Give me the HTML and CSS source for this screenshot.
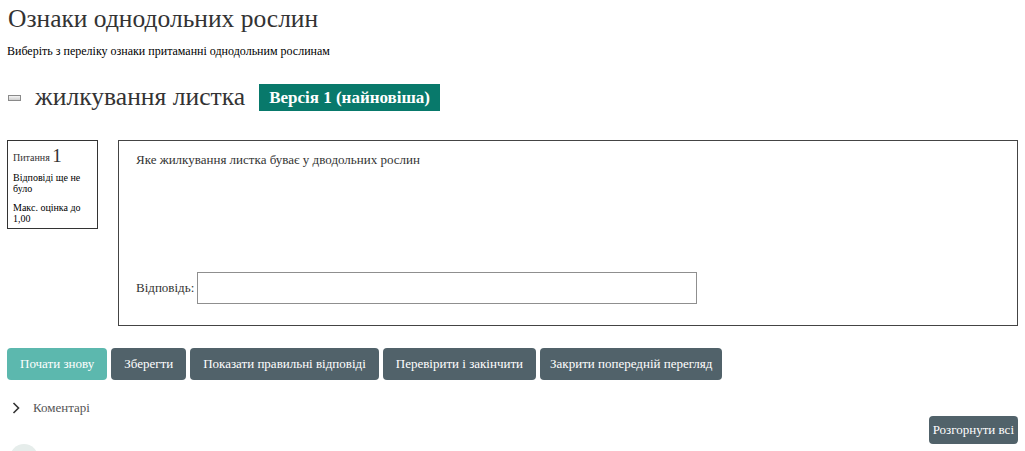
FILE: index.html
```html
<!DOCTYPE html>
<html lang="uk">
<head>
<meta charset="utf-8">
<title>Ознаки однодольних рослин</title>
<link rel="stylesheet" href="styles.css">
</head>
<body>
<div class="page">
  <h1 class="title">Ознаки однодольних рослин</h1>
  <p class="intro">Виберіть з переліку ознаки притаманні однодольним рослинам</p>
  <div class="heading-row">
    <span class="collapse-icon"></span>
    <h2 class="heading">жилкування листка</h2>
    <span class="badge">Версія 1 (найновіша)</span>
  </div>
  <div class="question">
    <div class="info">
      <div class="qno">Питання <span class="num">1</span></div>
      <div class="state">Відповіді ще не було</div>
      <div class="grade">Макс. оцінка до 1,00</div>
    </div>
    <div class="content">
      <div class="qtext">Яке жилкування листка буває у дводольних рослин</div>
      <div class="answer">
        <label class="answer-label">Відповідь:</label>
        <input class="answer-input" type="text">
      </div>
    </div>
  </div>
  <div class="buttons">
    <button class="btn btn-light">Почати знову</button>
    <button class="btn">Зберегти</button>
    <button class="btn">Показати правильні відповіді</button>
    <button class="btn">Перевірити і закінчити</button>
    <button class="btn btn-close">Закрити попередній перегляд</button>
  </div>
  <div class="comments">
    <svg class="chevron" width="8" height="12" viewBox="0 0 8 12"><path d="M1.5 1 L6.5 6 L1.5 11" fill="none" stroke="#333" stroke-width="1.6"/></svg>
    <span>Коментарі</span>
  </div>
  <div class="expand-row">
    <button class="btn btn-small">Розгорнути всі</button>
  </div>
  <div class="circle"></div>
</div>
</body>
</html>
```
FILE: styles.css
```css
html, body {
  margin: 0;
  padding: 0;
  background: #fff;
}
body {
  font-family: "Liberation Serif", "Times New Roman", serif;
  color: #333;
  overflow: hidden;
  height: 451px;
}
.page {
  padding: 0 7px;
}
.title {
  margin: 5px 0 0 1px;
  font-size: 25.5px;
  line-height: 28px;
  font-weight: normal;
  color: #333;
}
.intro {
  margin: 11px 0 0 0;
  font-size: 12px;
  line-height: 15px;
  color: #000;
}
.heading-row {
  display: flex;
  align-items: center;
  margin-top: 24px;
  height: 28px;
}
.collapse-icon {
  width: 11px;
  height: 4px;
  border: 1px solid #8a8a8a;
  background: linear-gradient(#f4f4f4, #cfcfcf);
  margin: 1px 14px 0 1px;
}
.heading {
  margin: 0;
  font-size: 25.6px;
  line-height: 28px;
  font-weight: normal;
  color: #333;
}
.badge {
  margin-left: 14px;
  background: #08796b;
  color: #fff;
  font-weight: bold;
  font-size: 17px;
  height: 27px;
  line-height: 27px;
  padding: 0 10px;
  white-space: nowrap;
}
.question {
  display: flex;
  align-items: flex-start;
  gap: 20px;
  margin-top: 29px;
}
.info {
  width: 79px;
  padding: 6px 5px 4px 5px;
  border: 1px solid #333;
  font-size: 10px;
  line-height: 11px;
  color: #000;
}
.qno {
  line-height: 18px;
  color: #333;
}
.num {
  font-size: 19px;
  vertical-align: -1px;
}
.state {
  margin-top: 5px;
}
.grade {
  margin-top: 8px;
}
.content {
  flex: 1;
  height: 184px;
  border: 1px solid #444;
  padding: 0 17px;
  display: flex;
  flex-direction: column;
  box-sizing: content-box;
}
.qtext {
  margin-top: 11px;
  font-size: 13px;
  line-height: 16px;
  color: #333;
}
.answer {
  margin-top: 104px;
  display: flex;
  align-items: center;
  gap: 3px;
}
.answer-label {
  font-size: 13px;
  color: #333;
}
.answer-input {
  width: 500px;
  height: 32px;
  box-sizing: border-box;
  border: 1px solid #8f8f8f;
  margin: 0;
  padding: 0 6px;
  font-family: inherit;
}
.buttons {
  display: flex;
  gap: 4px;
  margin-top: 22px;
}
.btn {
  font-family: "Liberation Serif", "Times New Roman", serif;
  font-size: 13px;
  color: #fff;
  background: #51626a;
  border: none;
  border-radius: 4px;
  height: 32px;
  padding: 0 13px;
  margin: 0;
  white-space: nowrap;
}
.btn-light {
  background: #5cb8ae;
}
.btn-close {
  padding: 0 10px;
}
.comments {
  display: flex;
  align-items: center;
  margin-top: 20px;
  height: 16px;
  font-size: 13px;
  color: #555;
}
.chevron {
  margin: 0 13px 0 5px;
}
.expand-row {
  display: flex;
  justify-content: flex-end;
  margin-top: 0;
}
.btn-small {
  height: 28px;
  padding: 0 4px;
  font-size: 13px;
}
.circle {
  width: 28px;
  height: 28px;
  border-radius: 50%;
  background: #e6edeb;
  margin: 0 0 0 3px;
}
```
